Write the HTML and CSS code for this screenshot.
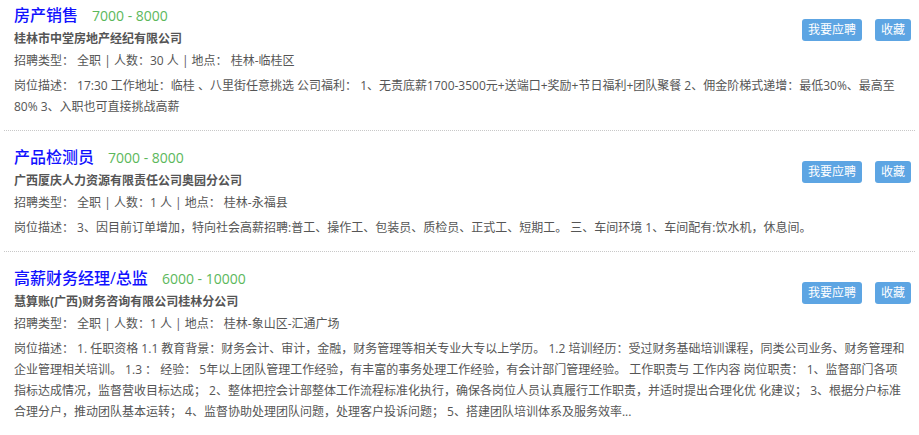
FILE: index.html
```
<!DOCTYPE html>
<html lang="zh-CN">
<head>
    <meta charset="UTF-8">
    <meta name="viewport" content="width=device-width, initial-scale=1.0">
    <title>职位列表</title>
    <link rel="stylesheet" href="styles.css">
</head>
<body>

    <!-- Job list -->
    <div class="job-list">

        <div class="job">
            <div class="job-head">
                <div class="job-main">
                    <h3 class="job-title"><a href="#">房产销售</a><span class="salary">7000 - 8000</span></h3>
                    <p class="company">桂林市中堂房地产经纪有限公司</p>
                    <p class="info">招聘类型： 全职 | 人数：30 人 | 地点： 桂林-临桂区</p>
                </div>
                <div class="job-actions">
                    <a href="#" class="btn">我要应聘</a>
                    <a href="#" class="btn">收藏</a>
                </div>
            </div>
            <p class="desc">岗位描述： 17:30 工作地址：临桂 、八里街任意挑选 公司福利： 1、无责底薪1700-3500元+送端口+奖励+节日福利+团队聚餐 2、佣金阶梯式递增：最低30%、最高至80% 3、入职也可直接挑战高薪</p>
        </div>

        <div class="job">
            <div class="job-head">
                <div class="job-main">
                    <h3 class="job-title"><a href="#">产品检测员</a><span class="salary">7000 - 8000</span></h3>
                    <p class="company">广西厦庆人力资源有限责任公司奥园分公司</p>
                    <p class="info">招聘类型： 全职 | 人数：1 人 | 地点： 桂林-永福县</p>
                </div>
                <div class="job-actions">
                    <a href="#" class="btn">我要应聘</a>
                    <a href="#" class="btn">收藏</a>
                </div>
            </div>
            <p class="desc">岗位描述： 3、因目前订单增加，特向社会高薪招聘:普工、操作工、包装员、质检员、正式工、短期工。 三、车间环境 1、车间配有:饮水机，休息间。</p>
        </div>

        <div class="job">
            <div class="job-head">
                <div class="job-main">
                    <h3 class="job-title"><a href="#">高薪财务经理/总监</a><span class="salary">6000 - 10000</span></h3>
                    <p class="company">慧算账(广西)财务咨询有限公司桂林分公司</p>
                    <p class="info">招聘类型： 全职 | 人数：1 人 | 地点： 桂林-象山区-汇通广场</p>
                </div>
                <div class="job-actions">
                    <a href="#" class="btn">我要应聘</a>
                    <a href="#" class="btn">收藏</a>
                </div>
            </div>
            <p class="desc">岗位描述： 1. 任职资格 1.1 教育背景：财务会计、审计，金融，财务管理等相关专业大专以上学历。 1.2 培训经历：受过财务基础培训课程，同类公司业务、财务管理和企业管理相关培训。 1.3 ： 经验： 5年以上团队管理工作经验，有丰富的事务处理工作经验，有会计部门管理经验。 工作职责与 工作内容 岗位职责： 1、监督部门各项指标达成情况，监督营收目标达成； 2、整体把控会计部整体工作流程标准化执行，确保各岗位人员认真履行工作职责，并适时提出合理化优 化建议； 3、根据分户标准合理分户，推动团队基本运转； 4、监督协助处理团队问题，处理客户投诉问题； 5、搭建团队培训体系及服务效率...</p>
        </div>

    </div>

</body>
</html>
```

FILE: styles.css
```
* {
    margin: 0;
    padding: 0;
    box-sizing: border-box;
}

body {
    font-family: "Open Sans", "Noto Sans CJK SC", "Microsoft YaHei", sans-serif;
    background-color: #fff;
    color: #555;
    font-size: 12px;
}

/* Job list */
.job-list {
    padding: 0 4px;
}

.job {
    padding: 14px 4px 13px 10px;
    border-top: 1px dotted #c8c8c8;
}

.job:first-child {
    padding-top: 3px;
    border-top: none;
}

.job-head {
    display: flex;
    justify-content: space-between;
    align-items: flex-start;
}

.job-title {
    font-size: 16px;
    line-height: 24px;
    font-weight: 500;
}

.job-title a {
    color: #1111ff;
    text-decoration: none;
}

.salary {
    color: #5cb85c;
    font-size: 14px;
    font-weight: normal;
    margin-left: 14px;
}

.company {
    font-weight: bold;
    line-height: 22px;
}

.info {
    line-height: 22px;
}

.desc {
    line-height: 21px;
    margin-top: 3px;
    padding-right: 6px;
}

/* Buttons */
.job-actions {
    display: flex;
    gap: 13px;
    margin-top: 16px;
}

.btn {
    display: block;
    background-color: #5da5e3;
    color: white;
    text-decoration: none;
    font-size: 12px;
    line-height: 22px;
    padding: 0 6px;
    border-radius: 3px;
}
```
